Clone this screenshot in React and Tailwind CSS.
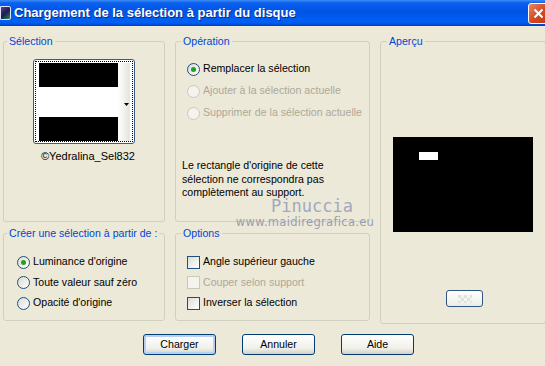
import React from "react";

function Radio({ checked, disabled }) {
  return (
    <span
      className={`w-[13px] h-[13px] rounded-full border flex items-center justify-center shrink-0 ${
        disabled
          ? "border-[#CAC8BB] bg-[#F4F3EE]"
          : "border-[#1C5180] bg-[linear-gradient(135deg,#DCD9CF,#FFFFFF)]"
      }`}
    >
      {checked && <span className="w-[5px] h-[5px] rounded-full bg-[#21A121]" />}
    </span>
  );
}

function Check({ disabled }) {
  return (
    <span
      className={`w-[13px] h-[13px] border shrink-0 ${
        disabled
          ? "border-[#CAC8BB] bg-[#F4F3EE]"
          : "border-[#1C5180] bg-[linear-gradient(135deg,#DCDCD6,#FFFFFF)]"
      }`}
    />
  );
}

function Option({ children, disabled, check, checked, h }) {
  return (
    <div className={`flex items-center gap-[3px] ${h}`}>
      {check ? <Check disabled={disabled} /> : <Radio checked={checked} disabled={disabled} />}
      <span className={`whitespace-nowrap ${disabled ? "text-[#ACA899]" : "text-black"}`}>{children}</span>
    </div>
  );
}

function Group({ label, className, legend, children }) {
  return (
    <fieldset className={`border border-[#D0D0BF] rounded-[3px] min-w-0 ${className}`}>
      <legend className={`px-[2px] leading-[14px] whitespace-nowrap text-[#0046D5] ${legend}`}>{label}</legend>
      {children}
    </fieldset>
  );
}

function Button({ children, focus }) {
  return (
    <button
      className={`w-[73px] h-[21px] rounded-[3px] border border-[#003C74] bg-[linear-gradient(180deg,#FFFFFF,#F0F0EA_70%,#D6D0C5)] text-black leading-none ${
        focus ? "shadow-[inset_0_0_0_2px_#B7CEF5]" : ""
      }`}
    >
      {children}
    </button>
  );
}

export default function App() {
  return (
    <div className="relative w-[545px] h-[366px] overflow-hidden bg-[#ECE9D8] font-['Liberation_Sans',Arial,sans-serif] text-[10.6px]">
      {/* Barre de titre */}
      <div className="h-[26px] flex items-center bg-[linear-gradient(180deg,#3C8CF7_0%,#0A5FEE_12%,#0054E3_45%,#0061F5_85%,#0053E0_92%,#003DD0_100%)]">
        <div className="w-[11px] h-[14px] mr-[3px] rounded-r-[2px] bg-[linear-gradient(135deg,#6C3A8C,#1B1B5A_50%,#2A8F3C)] border border-[#DDE4F5]" />
        <span className="text-white font-bold text-[13px] [text-shadow:1px_1px_0_#0A2A8A]">
          Chargement de la sélection à partir du disque
        </span>
        <div className="ml-auto mr-[-4px] w-[21px] h-[21px] rounded-[3px] border border-white bg-[linear-gradient(135deg,#E8876A,#D4461E_55%,#C13A12)] flex items-center justify-center">
          <svg width="11" height="11" viewBox="0 0 11 11">
            <path d="M1.5 1.5 L9.5 9.5 M9.5 1.5 L1.5 9.5" stroke="white" strokeWidth="2" />
          </svg>
        </div>
      </div>

      <div className="px-[3px] pt-[8px]">
        <div className="grid grid-cols-[162px_195px_166px] grid-rows-[188px_95px] gap-x-[10px] gap-y-[4px]">
          <Group label="Sélection" legend="ml-[3px]" className="h-[188px]">
            <div className="flex justify-center mt-[11px]">
              <div className="w-[102px] h-[85px] rounded-[3px] border border-[#3C5A82] bg-white p-[1px]">
                <div className="w-full h-full border border-dotted border-black flex pt-[1px] pl-[3px]">
                  <div className="w-[79px] flex flex-col">
                    <div className="h-[24px] bg-black" />
                    <div className="h-[30px] bg-white" />
                    <div className="h-[24px] bg-black" />
                  </div>
                  <div className="w-[12px] h-[78px] bg-[linear-gradient(90deg,#FFFFFF,#E4E3DC)] flex items-center justify-end pr-[1px]">
                    <svg width="5" height="3" viewBox="0 0 5 3" className="mt-[4px]">
                      <path d="M0 0 H5 L2.5 3 Z" fill="black" />
                    </svg>
                  </div>
                </div>
              </div>
            </div>
            <div className="mt-[6px] pl-[8px] text-center leading-[13px] text-[11px]">©Yedralina_Sel832</div>
          </Group>

          <Group label="Opération" legend="ml-[5px]" className="h-[188px]">
            <div className="pl-[11px] mt-[10px]">
              <Option checked h="h-[22px]">Remplacer la sélection</Option>
              <Option disabled h="h-[22px]">Ajouter à la sélection actuelle</Option>
              <Option disabled h="h-[22px]">Supprimer de la sélection actuelle</Option>
            </div>
            <p className="pl-[6px] mt-[35px] leading-[13.5px]">
              Le rectangle d'origine de cette
              <br />
              sélection ne correspondra pas
              <br />
              complètement au support.
            </p>
          </Group>

          <Group label="Aperçu" legend="ml-[6px]" className="row-span-2 self-start h-[290px]">
            <div className="flex flex-col items-center">
              <div className="mt-[89px] w-[140px] h-[95px] bg-black pt-[15px] pl-[26px]">
                <div className="w-[19px] h-[8px] bg-white" />
              </div>
              <div className="mt-[58px] ml-[3px] w-[37px] h-[17px] rounded-[3px] border border-[#2E5583] bg-[linear-gradient(180deg,#FFFFFF,#EDEDE6)] flex items-center justify-center">
                <div className="w-[14px] h-[8px] bg-[repeating-conic-gradient(#F4F4F0_0_25%,#E2E2DC_0_50%)] bg-[length:6px_6px]" />
              </div>
            </div>
          </Group>

          <Group label="Créer une sélection à partir de :" legend="ml-[3px]" className="h-[95px]">
            <div className="pl-[13px] mt-[12px]">
              <Option checked h="h-[20.5px]">Luminance d'origine</Option>
              <Option h="h-[20.5px]">Toute valeur sauf zéro</Option>
              <Option h="h-[20.5px]">Opacité d'origine</Option>
            </div>
          </Group>

          <Group label="Options" legend="ml-[5px]" className="h-[95px]">
            <div className="pl-[11px] mt-[12px]">
              <Option check h="h-[20.5px]">Angle supérieur gauche</Option>
              <Option check disabled h="h-[20.5px]">Couper selon support</Option>
              <Option check h="h-[20.5px]">Inverser la sélection</Option>
            </div>
          </Group>
        </div>

        <div className="flex gap-[26px] pl-[140px] mt-[13px]">
          <Button focus>Charger</Button>
          <Button>Annuler</Button>
          <Button>Aide</Button>
        </div>
      </div>

      {/* Filigrane */}
      <div className="absolute left-[245px] top-[198px] w-[120px] flex flex-col items-center pointer-events-none">
        <span className="font-['DejaVu_Sans_Mono',monospace] text-[17px] leading-[16px] text-[#9BA2BE] opacity-90 pl-[14px]">
          Pinuccia
        </span>
        <span className="mt-[2px] font-['DejaVu_Sans',sans-serif] text-[11.5px] leading-[12px] text-[#9097B2] opacity-90 tracking-[0.3px]">
          www.maidiregrafica.eu
        </span>
      </div>
    </div>
  );
}
